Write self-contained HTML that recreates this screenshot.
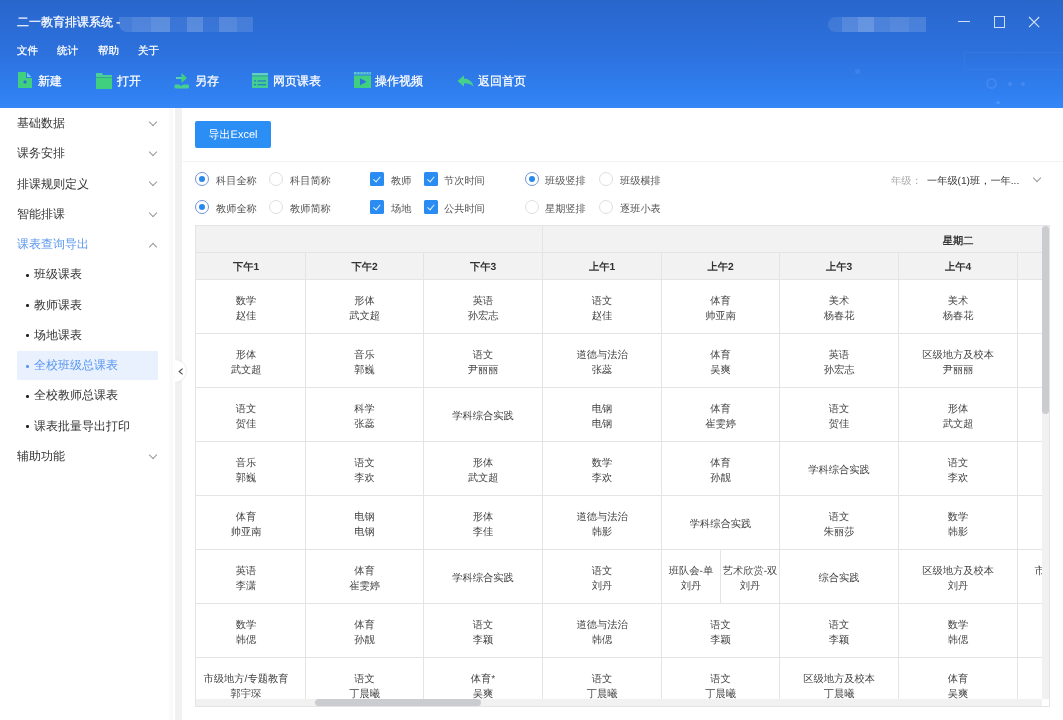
<!DOCTYPE html>
<html><head><meta charset="utf-8">
<style>
*{margin:0;padding:0;box-sizing:border-box}
html,body{width:1063px;height:720px;overflow:hidden;background:#fff;font-family:"Liberation Sans",sans-serif;text-rendering:geometricPrecision}
.a{position:absolute;white-space:nowrap}
#hdr{position:absolute;left:0;top:0;width:1063px;height:108px;z-index:2;background:linear-gradient(180deg,#2966cc 0%,#2c70dc 45%,#3080f1 88%,#3586f6 100%);overflow:hidden}
.wt{color:#fff;-webkit-text-stroke:0.25px #fff}
.title{left:17px;top:15px;font-size:12px;line-height:14px}
.menu{top:45px;font-size:10.5px;line-height:13px}
.tb{top:74px;font-size:12px;line-height:14px}
.blk{position:absolute;top:17px;height:15px;filter:blur(0.5px)}
#side{position:absolute;left:0;top:107px;width:175px;height:613px;background:#fff}
.si{position:absolute;left:17px;font-size:12px;line-height:14px;color:#333;top:0}
.sub{left:34px}
.dot{position:absolute;left:26px;width:2.6px;height:2.6px;background:#222;border-radius:50%}
.chev{position:absolute;left:150px;width:6px;height:6px;border-right:1.2px solid #999;border-bottom:1.2px solid #999;transform:rotate(45deg)}
#gut{position:absolute;left:175px;top:107px;width:7px;height:613px;background:#f1f1f1}
.opt{position:absolute;font-size:10.2px;line-height:12px;color:#555}
.rad{position:absolute;width:14px;height:14px;border-radius:50%;border:1px solid #dcdee2;background:#fff}
.rad.on{border:1px solid #6f95d6}
.rad.on:after{content:"";position:absolute;left:2.8px;top:2.8px;width:6.5px;height:6.5px;border-radius:50%;background:#2a88ec}
.chk{position:absolute;width:13.5px;height:13.5px;border-radius:1.5px;background:#2a8cf2}
.chk:after{content:"";position:absolute;left:5px;top:3px;width:3px;height:5.5px;border-right:1.3px solid #dff2ff;border-bottom:1.3px solid #dff2ff;transform:rotate(40deg)}
#tbl{position:absolute;left:195px;top:225px;width:855px;height:482px;overflow:hidden}
#tbl>div{position:absolute}
.hb{background:#f2f2f2}
.ht{font-size:10.25px;font-weight:bold;color:#333;text-align:center;line-height:32px}
.hl{height:1px;background:#e4e4e4}
.vl{width:1px;background:#e4e4e4}
.sbv,.sbh{background:#f1f1f1}
.th{position:absolute;background:#cbcccf;border-radius:4px}
.ob{border:1px solid #e4e4e4}
.hc{position:absolute;font-size:10.25px;font-weight:bold;color:#333;text-align:center;line-height:29.5px}
.c{position:absolute;white-space:nowrap;font-size:10.25px;line-height:15.5px;padding-top:5px;color:#444;text-align:center;display:flex;align-items:center;justify-content:center}
#root{position:absolute;left:0;top:0;width:1063px;height:720px;overflow:hidden;will-change:transform}
</style></head><body><div id="root">
<div id="hdr">
  <div class="a wt title">二一教育排课系统 -</div>
  <div class="blk" style="left:119px;width:134px;border-radius:0 0 0 8px;background:linear-gradient(90deg,rgba(255,255,255,.13) 0,rgba(255,255,255,.13) 10%,rgba(255,255,255,.18) 10%,rgba(255,255,255,.18) 24%,rgba(255,255,255,.24) 24%,rgba(255,255,255,.24) 38%,rgba(255,255,255,.08) 38%,rgba(255,255,255,.08) 51%,rgba(255,255,255,.22) 51%,rgba(255,255,255,.22) 63%,rgba(255,255,255,.07) 63%,rgba(255,255,255,.07) 75%,rgba(255,255,255,.2) 75%,rgba(255,255,255,.2) 88%,rgba(255,255,255,.13) 88%)"></div>
  <div class="blk" style="left:828px;width:98px;border-radius:8px 0 0 8px;background:linear-gradient(90deg,rgba(255,255,255,.1) 0,rgba(255,255,255,.1) 14%,rgba(255,255,255,.2) 14%,rgba(255,255,255,.2) 31%,rgba(255,255,255,.28) 31%,rgba(255,255,255,.28) 47%,rgba(255,255,255,.16) 47%,rgba(255,255,255,.16) 63%,rgba(255,255,255,.2) 63%,rgba(255,255,255,.2) 83%,rgba(255,255,255,.15) 83%)"></div>
  <div class="a wt menu" style="left:17px">文件</div>
  <div class="a wt menu" style="left:57px">统计</div>
  <div class="a wt menu" style="left:98px">帮助</div>
  <div class="a wt menu" style="left:138px">关于</div>
  <!-- deco -->
  <div class="a" style="left:964px;top:52px;width:110px;height:18px;border:1px solid rgba(140,180,255,.08)"></div>
  <div class="a" style="left:986px;top:78px;width:11px;height:11px;border-radius:50%;border:2px solid rgba(110,160,255,.28)"></div>
  <div class="a" style="left:1008px;top:81.5px;width:4px;height:4px;border-radius:50%;background:rgba(120,170,255,.3)"></div>
  <div class="a" style="left:1021px;top:81.5px;width:4px;height:4px;border-radius:50%;background:rgba(120,170,255,.3)"></div>
  <div class="a" style="left:995.5px;top:100.5px;width:4px;height:3px;border-radius:50%;background:rgba(130,180,255,.35)"></div>
  <div class="a" style="left:855px;top:69px;width:5px;height:5px;border-radius:50%;background:rgba(120,170,255,.2)"></div>
  <!-- window controls -->
  <div class="a" style="left:958px;top:21.2px;width:12px;height:1.3px;background:rgba(225,236,255,.9)"></div>
  <div class="a" style="left:993.5px;top:16px;width:11.5px;height:11.5px;border:1.1px solid rgba(225,236,255,.9)"></div>
  <svg class="a" style="left:1028px;top:16px" width="12" height="12" viewBox="0 0 12 12"><path d="M1 1L11.2 11.2M11.2 1L1 11.2" stroke="rgba(225,236,255,.9)" stroke-width="1.15"/></svg>
  <!-- toolbar -->
  <svg class="a" style="left:18px;top:72px" width="14" height="16" viewBox="0 0 14 16"><path d="M0 0H8V6H14V16H0Z" fill="#3fcf7e"/><path d="M9 0.5V5H13.5Z" fill="#6ec8f0"/><path d="M7 8L9 10L7 12L5 10Z" fill="#2a72d6"/></svg>
  <div class="a wt tb" style="left:38px">新建</div>
  <svg class="a" style="left:96px;top:72.5px" width="16" height="16.5" viewBox="0 0 16 16.5"><path d="M0 0H6L7 2H16V16.5H0Z" fill="#4bcf9a"/><path d="M0 4.5H16V16.5H0Z" fill="#3fcf7e"/><path d="M0 4.5H16" stroke="#35a88a" stroke-width="1"/></svg>
  <div class="a wt tb" style="left:117px">打开</div>
  <svg class="a" style="left:174px;top:72px" width="16" height="17" viewBox="0 0 16 17"><path d="M2 5H8.5V7H2Z" fill="#55d0b0"/><path d="M7.5 1L13 6L7.5 11Z" fill="#3fcf7e"/><path d="M0.5 13.5Q0.5 12.5 2 12.5H5Q7 15 9 12.5H13.5Q15 12.5 15 13.5V15.5Q15 16.5 13.5 16.5H2Q0.5 16.5 0.5 15.5Z" fill="#45cf90"/></svg>
  <div class="a wt tb" style="left:195px">另存</div>
  <svg class="a" style="left:252px;top:72.5px" width="16" height="15.5" viewBox="0 0 16 15.5"><rect x="0" y="0" width="16" height="15.5" fill="#45cf8e"/><rect x="0" y="0" width="16" height="2.5" fill="#60cfc8"/><rect x="0" y="2.5" width="16" height="1" fill="#2f9e9a"/><rect x="2" y="7.3" width="2" height="1.3" fill="#2a80c8"/><rect x="5.5" y="7.3" width="8.5" height="1.3" fill="#2a80c8"/><rect x="2" y="11" width="2" height="1.3" fill="#2a80c8"/><rect x="5.5" y="11" width="8.5" height="1.3" fill="#2a80c8"/></svg>
  <div class="a wt tb" style="left:273px">网页课表</div>
  <svg class="a" style="left:353.5px;top:72px" width="17" height="16" viewBox="0 0 17 16"><path d="M0 0H17V2.5H0Z" fill="#5fc8d8"/><path d="M3 0V2.5M6 0V2.5M9 0V2.5M12 0V2.5M15 0V2.5" stroke="#3a8ad8" stroke-width="0.8"/><rect x="0" y="3.5" width="17" height="12.5" fill="#3fcf7e"/><path d="M6 6.2L12.6 9.7L6 13.2Z" fill="#2c72e0"/></svg>
  <div class="a wt tb" style="left:375px">操作视频</div>
  <svg class="a" style="left:456.5px;top:74.5px" width="17" height="12" viewBox="0 0 17 12"><path d="M0.5 6L7 0.2V3.6C11.5 3.8 15.5 6.5 16.5 11.5C14 9 11 8.3 7 8.3V11.8Z" fill="#46d08c"/></svg>
  <div class="a wt tb" style="left:478px">返回首页</div>
</div>

<div id="side">
  <div class="si" style="top:9px">基础数据</div><div class="chev" style="top:11.5px"></div>
  <div class="si" style="top:39px">课务安排</div><div class="chev" style="top:41.5px"></div>
  <div class="si" style="top:70px">排课规则定义</div><div class="chev" style="top:71.5px"></div>
  <div class="si" style="top:100px">智能排课</div><div class="chev" style="top:102.5px"></div>
  <div class="si" style="top:130px;color:#5a96f0">课表查询导出</div><div class="chev" style="top:136.5px;transform:rotate(-135deg)"></div>
  <div class="si sub" style="top:160px">班级课表</div><div class="dot" style="top:167px"></div>
  <div class="si sub" style="top:191px">教师课表</div><div class="dot" style="top:197px"></div>
  <div class="si sub" style="top:221px">场地课表</div><div class="dot" style="top:227px"></div>
  <div class="a" style="left:17px;top:244px;width:141px;height:29px;background:#e8f1fd"></div>
  <div class="si sub" style="top:251px;color:#5a96f0">全校班级总课表</div><div class="dot" style="top:258px;background:#5a96f0"></div>
  <div class="si sub" style="top:281px">全校教师总课表</div><div class="dot" style="top:288px"></div>
  <div class="si sub" style="top:312px">课表批量导出打印</div><div class="dot" style="top:318px"></div>
  <div class="si" style="top:342px">辅助功能</div><div class="chev" style="top:344.5px"></div>
  <div class="a" style="left:169px;top:0;width:4px;height:613px;background:#fafafa"></div>
</div>
<div id="gut"></div>
<div class="a" style="left:175px;top:360px;width:11px;height:22px;border-radius:0 11px 11px 0;background:#fff;box-shadow:0.5px 0 1.5px rgba(0,0,0,.12)"></div>
<svg class="a" style="left:178px;top:368px" width="6" height="7" viewBox="0 0 6 7"><path d="M4.6 0.6L1.2 3.5L4.6 6.4" stroke="#555" stroke-width="1.2" fill="none"/></svg>

<!-- main -->
<div class="a" style="left:195px;top:121px;width:76px;height:27px;background:#2b8ef5;border-radius:2px;color:#fff;font-size:11px;line-height:29px;height:27px;overflow:hidden;text-align:center">导出Excel</div>
<div class="a" style="left:182px;top:161px;width:881px;height:1px;background:#f3f3f3"></div>

<div class="rad on" style="left:195px;top:172px"></div><div class="opt" style="left:216px;top:175.5px">科目全称</div>
<div class="rad" style="left:269px;top:172px"></div><div class="opt" style="left:290px;top:175.5px">科目简称</div>
<div class="chk" style="left:370px;top:172px"></div><div class="opt" style="left:391px;top:175.5px">教师</div>
<div class="chk" style="left:424px;top:172px"></div><div class="opt" style="left:444px;top:175.5px">节次时间</div>
<div class="rad on" style="left:525px;top:172px"></div><div class="opt" style="left:545px;top:175.5px">班级竖排</div>
<div class="rad" style="left:599px;top:172px"></div><div class="opt" style="left:620px;top:175.5px">班级横排</div>

<div class="rad on" style="left:195px;top:200px"></div><div class="opt" style="left:216px;top:203.5px">教师全称</div>
<div class="rad" style="left:269px;top:200px"></div><div class="opt" style="left:290px;top:203.5px">教师简称</div>
<div class="chk" style="left:370px;top:200px"></div><div class="opt" style="left:391px;top:203.5px">场地</div>
<div class="chk" style="left:424px;top:200px"></div><div class="opt" style="left:444px;top:203.5px">公共时间</div>
<div class="rad" style="left:525px;top:200px"></div><div class="opt" style="left:545px;top:203.5px">星期竖排</div>
<div class="rad" style="left:599px;top:200px"></div><div class="opt" style="left:620px;top:203.5px">逐班小表</div>

<div class="opt" style="left:891px;top:175.5px;color:#aaa">年级：</div>
<div class="opt" style="left:927px;top:175.5px;color:#333">一年级(1)班，一年...</div>
<div class="a" style="left:1034px;top:175px;width:6px;height:6px;border-right:1px solid #999;border-bottom:1px solid #999;transform:rotate(45deg)"></div>

<div id="tbl">
<div class="hb" style="left:0;top:0;width:900px;height:54px"></div>
<div class="hc" style="left:-8px;top:28px;width:118px;height:26px">下午1</div>
<div class="hc" style="left:111px;top:28px;width:117px;height:26px">下午2</div>
<div class="hc" style="left:229px;top:28px;width:118px;height:26px">下午3</div>
<div class="hc" style="left:348px;top:28px;width:118px;height:26px">上午1</div>
<div class="hc" style="left:467px;top:28px;width:117px;height:26px">上午2</div>
<div class="hc" style="left:585px;top:28px;width:118px;height:26px">上午3</div>
<div class="hc" style="left:704px;top:28px;width:118px;height:26px">上午4</div>
<div class="ht" style="left:704px;top:1px;width:118px;height:26px">星期二</div>
<div class="hl" style="left:0;top:27px;width:900px"></div>
<div class="hl" style="left:0;top:54px;width:900px"></div>
<div class="hl" style="left:0;top:108px;width:900px"></div>
<div class="hl" style="left:0;top:162px;width:900px"></div>
<div class="hl" style="left:0;top:216px;width:900px"></div>
<div class="hl" style="left:0;top:270px;width:900px"></div>
<div class="hl" style="left:0;top:324px;width:900px"></div>
<div class="hl" style="left:0;top:378px;width:900px"></div>
<div class="hl" style="left:0;top:432px;width:900px"></div>
<div class="hl" style="left:0;top:486px;width:900px"></div>
<div class="vl" style="left:110px;top:27px;height:468px"></div>
<div class="vl" style="left:228px;top:27px;height:468px"></div>
<div class="vl" style="left:347px;top:0px;height:495px"></div>
<div class="vl" style="left:466px;top:27px;height:468px"></div>
<div class="vl" style="left:584px;top:27px;height:468px"></div>
<div class="vl" style="left:703px;top:27px;height:468px"></div>
<div class="vl" style="left:822px;top:27px;height:468px"></div>
<div class="c" style="left:-8px;top:55px;width:118px;height:53px">数学<br>赵佳</div>
<div class="c" style="left:111px;top:55px;width:117px;height:53px">形体<br>武文超</div>
<div class="c" style="left:229px;top:55px;width:118px;height:53px">英语<br>孙宏志</div>
<div class="c" style="left:348px;top:55px;width:118px;height:53px">语文<br>赵佳</div>
<div class="c" style="left:467px;top:55px;width:117px;height:53px">体育<br>帅亚南</div>
<div class="c" style="left:585px;top:55px;width:118px;height:53px">美术<br>杨春花</div>
<div class="c" style="left:704px;top:55px;width:118px;height:53px">美术<br>杨春花</div>
<div class="c" style="left:-8px;top:109px;width:118px;height:53px">形体<br>武文超</div>
<div class="c" style="left:111px;top:109px;width:117px;height:53px">音乐<br>郭巍</div>
<div class="c" style="left:229px;top:109px;width:118px;height:53px">语文<br>尹丽丽</div>
<div class="c" style="left:348px;top:109px;width:118px;height:53px">道德与法治<br>张蕊</div>
<div class="c" style="left:467px;top:109px;width:117px;height:53px">体育<br>吴爽</div>
<div class="c" style="left:585px;top:109px;width:118px;height:53px">英语<br>孙宏志</div>
<div class="c" style="left:704px;top:109px;width:118px;height:53px">区级地方及校本<br>尹丽丽</div>
<div class="c" style="left:-8px;top:163px;width:118px;height:53px">语文<br>贺佳</div>
<div class="c" style="left:111px;top:163px;width:117px;height:53px">科学<br>张蕊</div>
<div class="c" style="left:229px;top:163px;width:118px;height:53px">学科综合实践</div>
<div class="c" style="left:348px;top:163px;width:118px;height:53px">电钢<br>电钢</div>
<div class="c" style="left:467px;top:163px;width:117px;height:53px">体育<br>崔雯婷</div>
<div class="c" style="left:585px;top:163px;width:118px;height:53px">语文<br>贺佳</div>
<div class="c" style="left:704px;top:163px;width:118px;height:53px">形体<br>武文超</div>
<div class="c" style="left:-8px;top:217px;width:118px;height:53px">音乐<br>郭巍</div>
<div class="c" style="left:111px;top:217px;width:117px;height:53px">语文<br>李欢</div>
<div class="c" style="left:229px;top:217px;width:118px;height:53px">形体<br>武文超</div>
<div class="c" style="left:348px;top:217px;width:118px;height:53px">数学<br>李欢</div>
<div class="c" style="left:467px;top:217px;width:117px;height:53px">体育<br>孙靓</div>
<div class="c" style="left:585px;top:217px;width:118px;height:53px">学科综合实践</div>
<div class="c" style="left:704px;top:217px;width:118px;height:53px">语文<br>李欢</div>
<div class="c" style="left:-8px;top:271px;width:118px;height:53px">体育<br>帅亚南</div>
<div class="c" style="left:111px;top:271px;width:117px;height:53px">电钢<br>电钢</div>
<div class="c" style="left:229px;top:271px;width:118px;height:53px">形体<br>李佳</div>
<div class="c" style="left:348px;top:271px;width:118px;height:53px">道德与法治<br>韩影</div>
<div class="c" style="left:467px;top:271px;width:117px;height:53px">学科综合实践</div>
<div class="c" style="left:585px;top:271px;width:118px;height:53px">语文<br>朱丽莎</div>
<div class="c" style="left:704px;top:271px;width:118px;height:53px">数学<br>韩影</div>
<div class="c" style="left:-8px;top:325px;width:118px;height:53px">英语<br>李潇</div>
<div class="c" style="left:111px;top:325px;width:117px;height:53px">体育<br>崔雯婷</div>
<div class="c" style="left:229px;top:325px;width:118px;height:53px">学科综合实践</div>
<div class="c" style="left:348px;top:325px;width:118px;height:53px">语文<br>刘丹</div>
<div class="c" style="left:467px;top:325px;width:58px;height:53px">班队会-单<br>刘丹</div>
<div class="c" style="left:526px;top:325px;width:58px;height:53px">艺术欣赏-双<br>刘丹</div>
<div class="vl" style="left:525px;top:325px;height:53px"></div>
<div class="c" style="left:585px;top:325px;width:118px;height:53px">综合实践</div>
<div class="c" style="left:704px;top:325px;width:118px;height:53px">区级地方及校本<br>刘丹</div>
<div class="c" style="left:823px;top:325px;width:118px;height:53px">市级地方/专题教育<br>郭宇琛</div>
<div class="c" style="left:-8px;top:379px;width:118px;height:53px">数学<br>韩偲</div>
<div class="c" style="left:111px;top:379px;width:117px;height:53px">体育<br>孙靓</div>
<div class="c" style="left:229px;top:379px;width:118px;height:53px">语文<br>李颖</div>
<div class="c" style="left:348px;top:379px;width:118px;height:53px">道德与法治<br>韩偲</div>
<div class="c" style="left:467px;top:379px;width:117px;height:53px">语文<br>李颖</div>
<div class="c" style="left:585px;top:379px;width:118px;height:53px">语文<br>李颖</div>
<div class="c" style="left:704px;top:379px;width:118px;height:53px">数学<br>韩偲</div>
<div class="c" style="left:-8px;top:433px;width:118px;height:53px">市级地方/专题教育<br>郭宇琛</div>
<div class="c" style="left:111px;top:433px;width:117px;height:53px">语文<br>丁晨曦</div>
<div class="c" style="left:229px;top:433px;width:118px;height:53px">体育*<br>吴爽</div>
<div class="c" style="left:348px;top:433px;width:118px;height:53px">语文<br>丁晨曦</div>
<div class="c" style="left:467px;top:433px;width:117px;height:53px">语文<br>丁晨曦</div>
<div class="c" style="left:585px;top:433px;width:118px;height:53px">区级地方及校本<br>丁晨曦</div>
<div class="c" style="left:704px;top:433px;width:118px;height:53px">体育<br>吴爽</div>
<div class="sbv" style="left:847px;top:1px;width:7px;height:473px"><div class="th" style="left:0;top:0;width:7px;height:188px"></div></div>
<div class="sbh" style="left:1px;top:474px;width:846px;height:7px"><div class="th" style="left:119px;top:0;width:166px;height:7px"></div></div>
<div style="left:847px;top:474px;width:7px;height:7px;background:#fff"></div>
<div class="ob" style="left:0;top:0;width:855px;height:482px"></div>
</div><!--/tbl-->
</div></body></html>
